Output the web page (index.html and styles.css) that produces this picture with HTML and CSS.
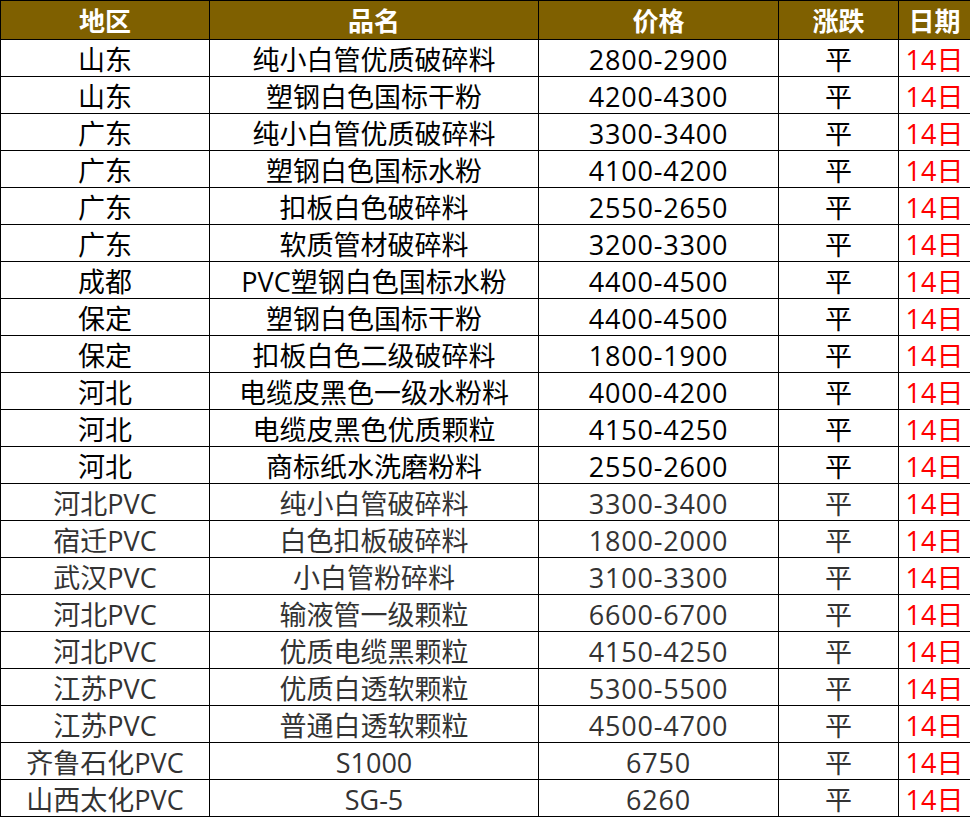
FILE: index.html
```html
<!DOCTYPE html>
<html lang="zh-CN">
<head>
<meta charset="utf-8">
<link rel="stylesheet" href="styles.css">
</head>
<body>
<table class="price-table">
  <colgroup>
    <col class="c-region"><col class="c-name"><col class="c-price"><col class="c-change"><col class="c-date">
  </colgroup>
  <thead>
    <tr><th>地区</th><th>品名</th><th>价格</th><th>涨跌</th><th>日期</th></tr>
  </thead>
  <tbody>
    <tr><td>山东</td><td>纯小白管优质破碎料</td><td class="price">2800-2900</td><td>平</td><td class="date">14日</td></tr>
    <tr><td>山东</td><td>塑钢白色国标干粉</td><td class="price">4200-4300</td><td>平</td><td class="date">14日</td></tr>
    <tr><td>广东</td><td>纯小白管优质破碎料</td><td class="price">3300-3400</td><td>平</td><td class="date">14日</td></tr>
    <tr><td>广东</td><td>塑钢白色国标水粉</td><td class="price">4100-4200</td><td>平</td><td class="date">14日</td></tr>
    <tr><td>广东</td><td>扣板白色破碎料</td><td class="price">2550-2650</td><td>平</td><td class="date">14日</td></tr>
    <tr><td>广东</td><td>软质管材破碎料</td><td class="price">3200-3300</td><td>平</td><td class="date">14日</td></tr>
    <tr><td>成都</td><td>PVC塑钢白色国标水粉</td><td class="price">4400-4500</td><td>平</td><td class="date">14日</td></tr>
    <tr><td>保定</td><td>塑钢白色国标干粉</td><td class="price">4400-4500</td><td>平</td><td class="date">14日</td></tr>
    <tr><td>保定</td><td>扣板白色二级破碎料</td><td class="price">1800-1900</td><td>平</td><td class="date">14日</td></tr>
    <tr><td>河北</td><td>电缆皮黑色一级水粉料</td><td class="price">4000-4200</td><td>平</td><td class="date">14日</td></tr>
    <tr><td>河北</td><td>电缆皮黑色优质颗粒</td><td class="price">4150-4250</td><td>平</td><td class="date">14日</td></tr>
    <tr><td>河北</td><td>商标纸水洗磨粉料</td><td class="price">2550-2600</td><td>平</td><td class="date">14日</td></tr>
    <tr class="grey"><td>河北PVC</td><td>纯小白管破碎料</td><td class="price">3300-3400</td><td>平</td><td class="date">14日</td></tr>
    <tr class="grey"><td>宿迁PVC</td><td>白色扣板破碎料</td><td class="price">1800-2000</td><td>平</td><td class="date">14日</td></tr>
    <tr class="grey"><td>武汉PVC</td><td>小白管粉碎料</td><td class="price">3100-3300</td><td>平</td><td class="date">14日</td></tr>
    <tr class="grey"><td>河北PVC</td><td>输液管一级颗粒</td><td class="price">6600-6700</td><td>平</td><td class="date">14日</td></tr>
    <tr class="grey"><td>河北PVC</td><td>优质电缆黑颗粒</td><td class="price">4150-4250</td><td>平</td><td class="date">14日</td></tr>
    <tr class="grey"><td>江苏PVC</td><td>优质白透软颗粒</td><td class="price">5300-5500</td><td>平</td><td class="date">14日</td></tr>
    <tr class="grey"><td>江苏PVC</td><td>普通白透软颗粒</td><td class="price">4500-4700</td><td>平</td><td class="date">14日</td></tr>
    <tr class="grey"><td>齐鲁石化PVC</td><td>S1000</td><td class="price">6750</td><td>平</td><td class="date">14日</td></tr>
    <tr class="grey"><td>山西太化PVC</td><td>SG-5</td><td class="price">6260</td><td>平</td><td class="date">14日</td></tr>
  </tbody>
</table>
</body>
</html>
```

FILE: styles.css
```css
html, body {
  margin: 0;
  padding: 0;
  background: #ffffff;
}

.price-table {
  width: 970px;
  table-layout: fixed;
  border-collapse: collapse;
  font-family: "Open Sans", "Noto Sans CJK SC", sans-serif;
  font-size: 27px;
  color: #000000;
}

.c-region { width: 209px; }
.c-name { width: 329px; }
.c-price { width: 240px; }
.c-change { width: 120px; }
.c-date { width: 72px; }

.price-table th,
.price-table td {
  border: 1px solid #000000;
  padding: 0;
  text-align: center;
  white-space: nowrap;
  overflow: hidden;
  line-height: 1;
  box-sizing: border-box;
}

.price-table th {
  height: 39px;
  background: #7f6000;
  color: #ffffff;
  font-weight: bold;
  font-size: 26px;
  padding-top: 1px;
}

.price-table td {
  height: 37px;
  padding-top: 2px;
}

.price-table td.price {
  letter-spacing: 0.8px;
}

.price-table tr.grey td {
  color: #333333;
}

.price-table tr td.date {
  color: #ff0000;
}
```
